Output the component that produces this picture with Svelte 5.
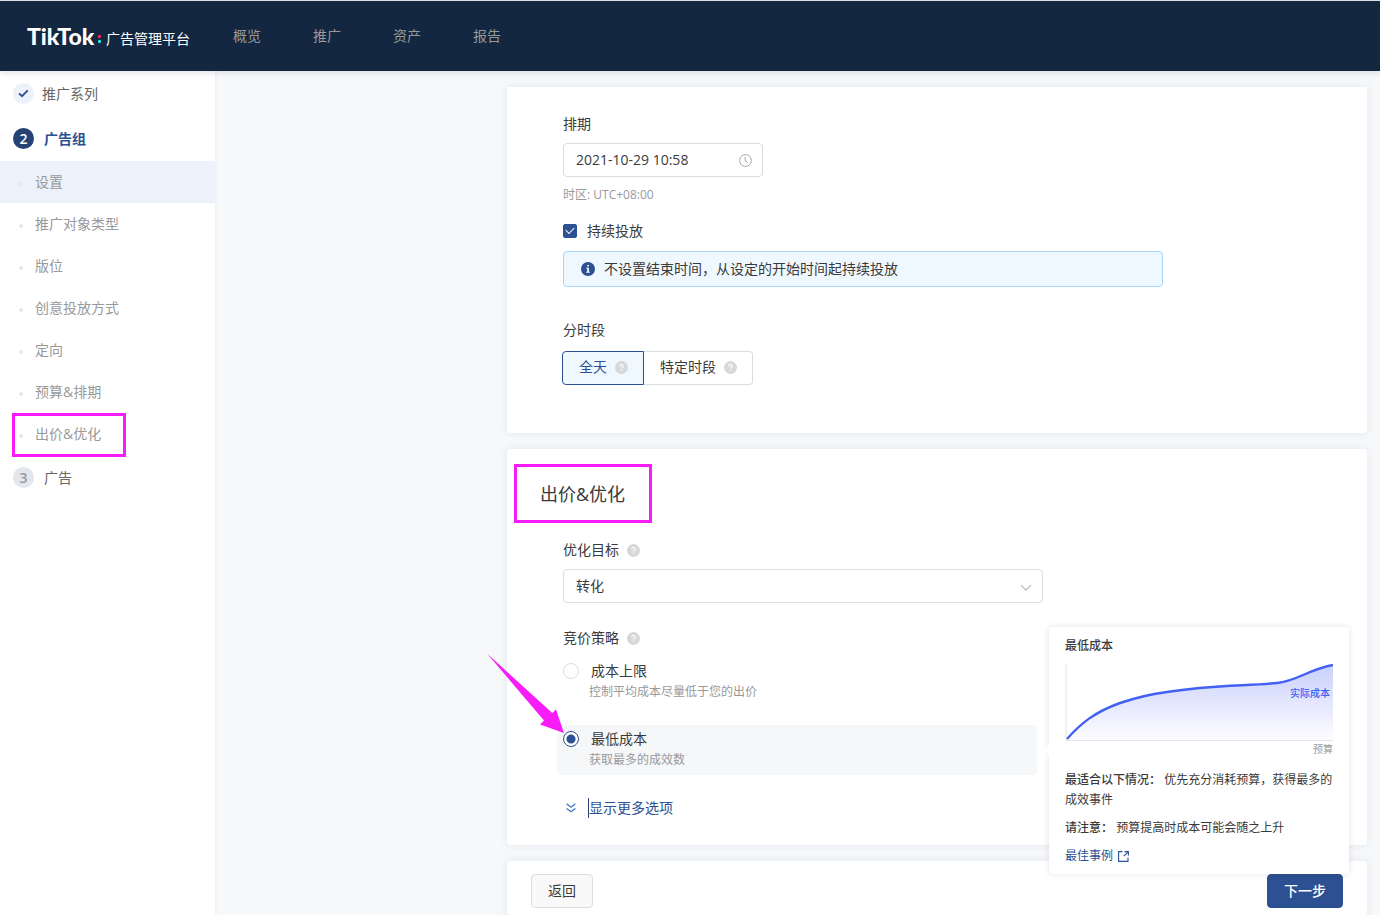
<script lang="ts">
  const nav = ['概览', '推广', '资产', '报告'];

  const sections: { label: string; active?: boolean; marked?: boolean }[] = [
    { label: '设置', active: true },
    { label: '推广对象类型' },
    { label: '版位' },
    { label: '创意投放方式' },
    { label: '定向' },
    { label: '预算&排期' },
    { label: '出价&优化', marked: true }
  ];

  const dayparts = [
    { id: 'all', label: '全天' },
    { id: 'custom', label: '特定时段' }
  ];

  const curve = 'M2 76C16 60 30 49 55 40 70 35 86 31 102 29 145 22 180 23 212 20 232 18 242 7 268 2';

  let start = $state('2021-10-29 10:58');
  let continuous = $state(true);
  let daypart = $state('all');
  let goal = $state('转化');
  let strategy = $state('lowest');
</script>

{#snippet help()}
  <svg class="help" width="13" height="13" viewBox="0 0 13 13" aria-hidden="true">
    <circle cx="6.5" cy="6.5" r="6.5" fill="#d6d8da" />
    <path d="M4.7 5.2c0-1 .8-1.7 1.8-1.7s1.8.7 1.8 1.6c0 1.2-1.7 1.2-1.7 2.5" fill="none" stroke="#fff" stroke-width="1.1" />
    <circle cx="6.6" cy="9.3" r="0.75" fill="#fff" />
  </svg>
{/snippet}

<div class="page">
  <header>
    <a class="brand" href="#home">
      <span class="logo">TikTok</span>
      <span class="colon"><i></i><i></i></span>
      <span class="product">广告管理平台</span>
    </a>
    <nav>
      {#each nav as item}
        <a href="#{item}">{item}</a>
      {/each}
    </nav>
  </header>

  <div class="body">
    <aside>
      <a class="step done" href="#campaign">
        <span class="num">
          <svg width="11" height="9" viewBox="0 0 11 9"><path d="M1 4.4 4 7.2 9.8 1.4" fill="none" stroke="#2c5091" stroke-width="1.9" /></svg>
        </span>
        推广系列
      </a>
      <a class="step current" href="#adgroup"><span class="num">2</span>广告组</a>
      <ul>
        {#each sections as s (s.label)}
          <li class:active={s.active} class:marked={s.marked}>
            <a href="#{s.label}">{s.label}</a>
          </li>
        {/each}
      </ul>
      <a class="step" href="#ad"><span class="num">3</span>广告</a>
    </aside>

    <main>
      <section class="card schedule">
        <label class="label" for="start">排期</label>
        <div class="date">
          <input id="start" type="text" bind:value={start} />
          <svg width="13" height="13" viewBox="0 0 13 13" fill="none" stroke="#a3a6a9">
            <circle cx="6.5" cy="6.5" r="5.9" />
            <path d="M6.2 3v4l2.3 1.4" />
          </svg>
        </div>
        <p class="zone">时区: UTC+08:00</p>
        <label class="check">
          <input type="checkbox" bind:checked={continuous} />
          持续投放
        </label>
        <div class="alert">
          <svg width="14" height="14" viewBox="0 0 14 14" aria-hidden="true">
            <circle cx="7" cy="7" r="7" fill="#2c5091" />
            <path d="M6.2 3h1.7v1.6H6.2zM5.3 5.8h2.6v4h.9v1H5.2v-1h1V6.8h-.9z" fill="#fff" />
          </svg>
          不设置结束时间，从设定的开始时间起持续投放
        </div>
        <div class="label" id="daypart">分时段</div>
        <div class="segmented" role="group" aria-labelledby="daypart">
          {#each dayparts as d (d.id)}
            <button
              type="button"
              class:active={daypart === d.id}
              aria-pressed={daypart === d.id}
              onclick={() => (daypart = d.id)}
            >
              {d.label}{@render help()}
            </button>
          {/each}
        </div>
      </section>

      <section class="card bidding">
        <h2>出价&优化</h2>
        <div class="fields">
          <label class="label" for="goal">优化目标 {@render help()}</label>
          <div class="select">
            <select id="goal" bind:value={goal}>
              <option>转化</option>
            </select>
            <svg width="12" height="8" viewBox="0 0 12 8"><path d="m1 1.2 5 5 5-5" fill="none" stroke="#b4b8bb" stroke-width="1.2" /></svg>
          </div>

          <div class="label strategy" id="strategy">竞价策略 {@render help()}</div>
          <div class="options" role="radiogroup" aria-labelledby="strategy">
            <label class="option" class:selected={strategy === 'cap'}>
              <input type="radio" value="cap" bind:group={strategy} />
              <span>
                <span class="name">成本上限</span>
                <span class="hint">控制平均成本尽量低于您的出价</span>
              </span>
            </label>
            <div class="anchor">
              <label class="option" class:selected={strategy === 'lowest'}>
                <input type="radio" value="lowest" bind:group={strategy} />
                <span>
                  <span class="name">最低成本</span>
                  <span class="hint">获取最多的成效数</span>
                </span>
              </label>
              <svg class="arrow" width="78" height="81" viewBox="0 0 78 81" aria-hidden="true">
                <path d="M0 .5 65.3 60l3.7-3.5L77 80 53 71.5 57 67.5Z" fill="#f81cf8" />
              </svg>

              <div class="tip" role="tooltip">
                <h3>最低成本</h3>
                <div class="chart">
                  <svg viewBox="0 0 268 79" aria-hidden="true">
                    <defs>
                      <linearGradient id="fill" x1="0" y1="0" x2="0" y2="1">
                        <stop offset="0" stop-color="#c9d0fb" />
                        <stop offset="1" stop-color="#fdfdff" />
                      </linearGradient>
                    </defs>
                    <path d="{curve}V77H2Z" fill="url(#fill)" />
                    <path d="M1 0V77.5H268" fill="none" stroke="#e3e5e8" />
                    <path d={curve} fill="none" stroke="#4360f4" stroke-width="2.4" />
                  </svg>
                  <span class="series">实际成本</span>
                </div>
                <div class="axis">预算</div>
                <p><strong>最适合以下情况：</strong> 优先充分消耗预算，获得最多的成效事件</p>
                <p><strong>请注意：</strong> 预算提高时成本可能会随之上升</p>
                <a href="#best">
                  最佳事例
                  <svg width="11" height="11" viewBox="0 0 11 11" fill="none" stroke="#2c5091" stroke-width="1.1">
                    <path d="M4.5.6H.6v9.800H10V6.500M6.500.6h3.900v3.900M10.200.8 5.800 5.200" />
                  </svg>
                </a>
              </div>
            </div>
          </div>

          <button class="more" type="button">
            <svg width="10" height="10" viewBox="0 0 10 10" fill="none" stroke="#3f72c9" stroke-width="1.3">
              <path d="m.6.8 4.400 3.400L9.400.8M.6 5.400 5 8.800l4.400-3.400" />
            </svg>
            <span>显示更多选项</span>
          </button>
        </div>
      </section>

      <footer class="card">
        <button class="back" type="button">返回</button>
        <button class="next" type="button">下一步</button>
      </footer>
    </main>
  </div>
</div>

<style>
  :global(body) { margin: 0; }
  .page {
    --blue: #2c5091;
    --mark: #f81cf8;
    display: flex;
    flex-direction: column;
    min-height: 100vh;
    font-family: 'Open Sans', 'Noto Sans CJK SC', sans-serif;
    font-size: 14px;
    line-height: 20px;
    color: #3a3a3a;
    background: #f6f8fa;
  }
  .page *, .page *::before, .page *::after { box-sizing: border-box; }
  a { color: inherit; text-decoration: none; }
  button, input, select { font: inherit; color: inherit; }
  button { cursor: pointer; }
  p, h2, h3, ul { margin: 0; padding: 0; }
  svg { flex: none; }

  header {
    display: flex;
    align-items: center;
    height: 71px;
    padding-left: 27px;
    border-top: 1px solid #d9dfe2;
    background: #132740;
    box-shadow: 0 2px 6px rgba(20, 20, 60, 0.12);
    position: relative;
  }
  .brand {
    display: flex;
    align-items: center;
    width: 206px;
    color: #fff;
    white-space: nowrap;
  }
  .logo {
    width: 70px;
    font-family: Lato, sans-serif;
    font-size: 23px;
    font-weight: 900;
  }
  .colon {
    display: flex;
    flex-direction: column;
    gap: 2px;
    margin: 6px 5px 0 1px;
  }
  .colon i {
    width: 3px;
    height: 3px;
    border-radius: 1px;
    background: #25e5df;
  }
  .colon i:first-child { background: #f72c55; }
  .product { padding-top: 5px; }
  nav {
    display: flex;
    gap: 52px;
    color: #98999b;
  }

  .body { display: flex; flex: 1; }
  aside {
    flex: none;
    width: 215px;
    background: #fff;
    box-shadow: 0 0 4px rgba(30, 50, 90, 0.06);
    color: #999;
  }
  .step {
    display: flex;
    align-items: center;
    gap: 10px;
    height: 45px;
    padding-left: 13px;
    color: #666;
  }
  .step .num {
    display: flex;
    align-items: center;
    justify-content: center;
    width: 21px;
    height: 21px;
    border-radius: 50%;
    background: #e3e7ec;
    color: #96999e;
    font-weight: 600;
  }
  .step.done { gap: 8px; }
  .step.done .num { background: #edf1fa; }
  .step.current { color: var(--blue); font-weight: 700; }
  .step.current .num { background: #254274; color: #fff; }
  ul { list-style: none; }
  li {
    position: relative;
    display: flex;
    align-items: center;
    height: 42px;
    padding-left: 19px;
  }
  li::before {
    content: '';
    width: 4px;
    height: 4px;
    margin: 4px 12px 0 0;
    border-radius: 50%;
    background: #e6e8ea;
  }
  li.active { background: #edf1fa; }
  li.marked::after {
    content: '';
    position: absolute;
    top: 0;
    left: 12px;
    width: 114px;
    height: 44px;
    border: 3px solid var(--mark);
    pointer-events: none;
  }

  main {
    flex: 1;
    display: flex;
    flex-direction: column;
    gap: 16px;
    padding: 16px 13px 0 292px;
  }
  .card {
    background: #fff;
    border-radius: 4px;
    box-shadow: 0 0 8px rgba(40, 70, 110, 0.09);
  }
  .label {
    display: flex;
    align-items: center;
    gap: 8px;
    margin-bottom: 9px;
  }
  .schedule {
    padding: 27px 56px 48px;
    border-radius: 0 0 4px 4px;
  }
  .date, .select {
    position: relative;
    width: 200px;
  }
  .date input, select {
    display: block;
    width: 100%;
    height: 34px;
    padding: 0 12px;
    border: 1px solid #dadee0;
    border-radius: 4px;
    background: #fff;
    appearance: none;
  }
  .date input { padding-bottom: 2px; }
  .date svg, .select svg {
    position: absolute;
    top: 11px;
    right: 11px;
    pointer-events: none;
  }
  .zone {
    margin: 8px 0 16px;
    font-size: 12px;
    color: #999;
  }
  .check {
    display: flex;
    align-items: center;
    gap: 10px;
  }
  .check input {
    display: grid;
    place-items: center;
    width: 14px;
    height: 14px;
    margin: 0;
    border: 1px solid #cdd1d5;
    border-radius: 2px;
    appearance: none;
  }
  .check input:checked { border-color: var(--blue); background: var(--blue); }
  .check input:checked::after {
    content: '';
    width: 8px;
    height: 5px;
    margin-bottom: 3px;
    border: solid #fff;
    border-width: 0 0 1px 1px;
    transform: rotate(-45deg);
  }
  .alert {
    display: flex;
    align-items: center;
    gap: 9px;
    max-width: 600px;
    height: 36px;
    margin: 10px 0 33px;
    padding-left: 17px;
    border: 1px solid #a5d6fb;
    border-radius: 4px;
    background: #f0f8ff;
  }
  .segmented {
    display: flex;
    margin: 11px 0 0 -1px;
  }
  .segmented button {
    display: flex;
    align-items: center;
    gap: 8px;
    height: 34px;
    padding: 0 15px 2px 16px;
    border: 1px solid #dadee0;
    border-left: 0;
    border-radius: 0 4px 4px 0;
    background: #fff;
  }
  .segmented button:first-child { border-left: 1px solid #dadee0; border-radius: 4px 0 0 4px; }
  .segmented button.active {
    border-color: var(--blue);
    background: #f0f8ff;
    color: var(--blue);
  }

  .bidding { padding: 15px 7px 27px; }
  h2 {
    width: fit-content;
    padding: 2px 24px 0 23px;
    border: 3px solid var(--mark);
    font-size: 18px;
    font-weight: 400;
    line-height: 51px;
  }
  .fields { padding: 17px 49px 0; }
  .select { width: 480px; }
  .select svg { top: 15px; }
  .strategy { margin-top: 25px; }
  .options {
    display: flex;
    flex-direction: column;
    gap: 18px;
    width: 480px;
    margin-left: -6px;
  }
  .anchor { position: relative; }
  .option {
    display: flex;
    gap: 10px;
    padding: 4px 6px 5px;
    border-radius: 4px;
  }
  .option.selected { background: #f5f7f9; }
  .option input {
    width: 16px;
    height: 16px;
    margin: 2px 0;
    border: 1px solid #dadee0;
    border-radius: 50%;
    background: #fff;
    appearance: none;
  }
  .option input:checked {
    border-color: var(--blue);
    background: radial-gradient(circle, var(--blue) 4px, #fff 5px);
  }
  .name, .hint { display: block; }
  .name { padding-left: 2px; }
  .hint {
    padding-top: 1px;
    font-size: 12px;
    color: #999;
  }
  .arrow {
    position: absolute;
    top: -72px;
    left: -70px;
    pointer-events: none;
  }
  .tip {
    position: absolute;
    top: -98px;
    left: 492px;
    z-index: 1;
    width: 300px;
    padding: 9px 16px 8px;
    border-radius: 4px;
    background: #fff;
    box-shadow: 0 0 6px rgba(40, 50, 70, 0.13);
    font-size: 12px;
  }
  .tip::before {
    content: '';
    position: absolute;
    top: 118px;
    left: -5px;
    border: solid transparent;
    border-width: 5px 5px 5px 0;
    border-right-color: #fff;
  }
  h3 { font-size: 12px; font-weight: 500; }
  .chart { position: relative; margin-top: 7px; }
  .chart svg { display: block; width: 100%; }
  .series {
    position: absolute;
    top: 20px;
    right: 3px;
    font-size: 10px;
    font-weight: 500;
    color: #4360f4;
  }
  .axis {
    margin-bottom: 14px;
    font-size: 10px;
    line-height: 14px;
    text-align: right;
    color: #999;
  }
  .tip p { margin-bottom: 8px; }
  strong { font-weight: 500; }
  .tip a {
    display: flex;
    align-items: center;
    gap: 5px;
    color: var(--blue);
  }
  .more {
    display: flex;
    align-items: center;
    gap: 13px;
    margin-top: 23px;
    padding: 0 0 0 3px;
    border: 0;
    background: none;
    color: var(--blue);
  }
  .more span { box-shadow: -1px 0 #254274; }

  footer {
    display: flex;
    flex: 1;
    justify-content: space-between;
    align-items: flex-start;
    padding: 13px 24px 7px;
    border-radius: 4px 4px 0 0;
  }
  footer button {
    height: 34px;
    padding: 0 16px;
    border: 1px solid #dadee0;
    border-radius: 4px;
    background: #f9f9fa;
  }
  footer .next {
    border-color: var(--blue);
    background: var(--blue);
    color: #fff;
    font-weight: 500;
  }
</style>
